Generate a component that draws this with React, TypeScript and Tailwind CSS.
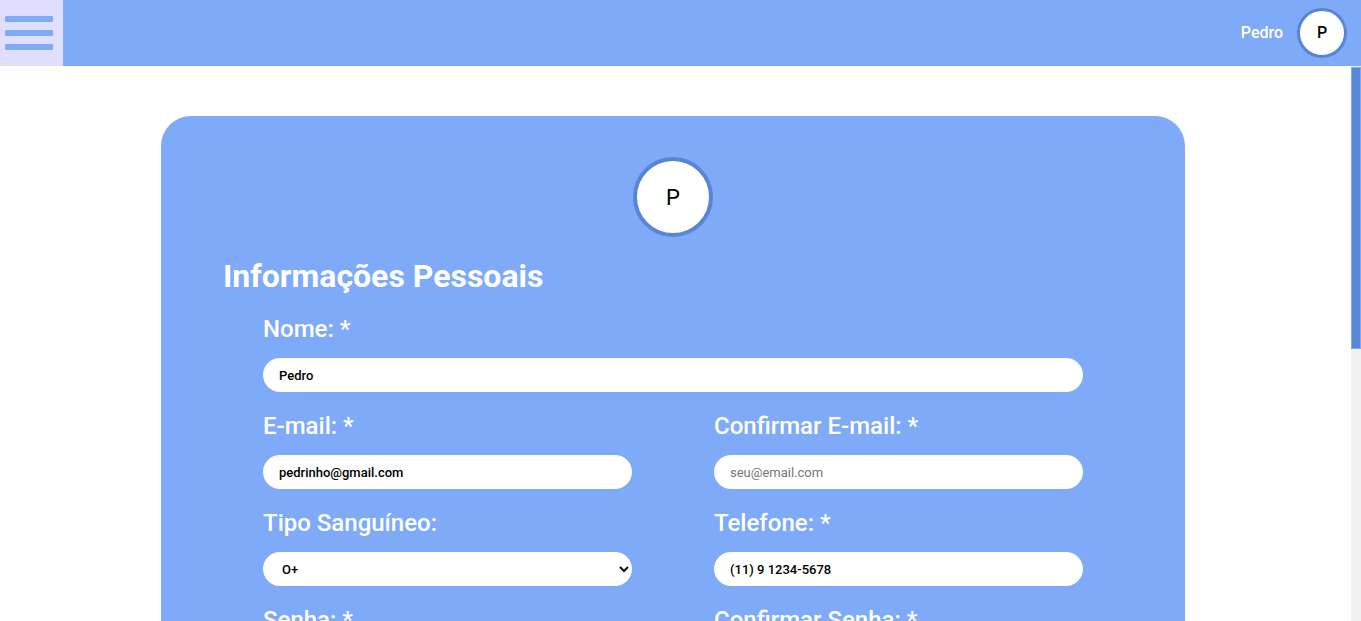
import React from 'react';

const Field = ({ label, children }: { label: string; children: React.ReactNode }) => (
  <div className="flex flex-col">
    <label className="text-[24px] leading-[28px] font-medium text-white mb-[15px]">{label}</label>
    {children}
  </div>
);

const inputCls =
  'h-[34px] w-full rounded-full bg-white pl-[16px] pr-4 text-[13px] font-medium text-black outline-none placeholder:text-[#757575] placeholder:font-normal';

const App: React.FC = () => {
  return (
    <div className="h-screen flex flex-col bg-white" style={{ fontFamily: 'Roboto, "Liberation Sans", sans-serif' }}>
      {/* Header */}
      <header className="h-[66px] shrink-0 bg-[#7eaaf8] flex items-center justify-between">
        <button className="h-full w-[63px] bg-[#e0defd] flex flex-col items-start justify-center gap-[8px] pl-[5px]">
          <span className="block w-[48px] h-[6px] bg-[#7eaaf8] rounded-[1px]" />
          <span className="block w-[48px] h-[6px] bg-[#7eaaf8] rounded-[1px]" />
          <span className="block w-[48px] h-[6px] bg-[#7eaaf8] rounded-[1px]" />
        </button>
        <div className="flex items-center gap-[14px] pr-[14px]">
          <span className="text-white text-[16px] font-medium">Pedro</span>
          <div className="w-[50px] h-[50px] rounded-full bg-white border-[3px] border-[#5885d6] flex items-center justify-center text-[16px] font-medium text-black">
            P
          </div>
        </div>
      </header>

      <div className="flex-1 min-h-0 flex">
        {/* Scroll area */}
        <main className="flex-1 overflow-y-auto [scrollbar-width:none]">
          <div className="pt-[50px] pb-[50px] pl-[161px]">
            <section className="w-[1024px] rounded-[30px] bg-[#7eaaf8] pt-[41px] pb-[60px]">
              <div className="flex justify-center">
                <div className="w-[80px] h-[80px] rounded-full bg-white border-4 border-[#5885d6] flex items-center justify-center text-[22px] text-black">
                  P
                </div>
              </div>

              <h2 className="mt-[21px] ml-[62px] text-[32px] leading-[37px] font-bold text-white">Informações Pessoais</h2>

              <div className="mt-[20px] px-[102px] flex flex-col gap-[20px]">
                <Field label="Nome: *">
                  <input className={inputCls} defaultValue="Pedro" />
                </Field>

                <div className="grid grid-cols-2 gap-x-[82px] gap-y-[20px]">
                  <Field label="E-mail: *">
                    <input className={inputCls} defaultValue="pedrinho@gmail.com" />
                  </Field>
                  <Field label="Confirmar E-mail: *">
                    <input className={inputCls} placeholder="seu@email.com" />
                  </Field>
                  <Field label="Tipo Sanguíneo:">
                    <select className="h-[34px] w-full rounded-full bg-white pl-[15px] pr-[4px] text-[13px] font-medium text-black outline-none" defaultValue="O+">
                      <option>A+</option>
                      <option>A-</option>
                      <option>B+</option>
                      <option>B-</option>
                      <option>AB+</option>
                      <option>AB-</option>
                      <option>O+</option>
                      <option>O-</option>
                    </select>
                  </Field>
                  <Field label="Telefone: *">
                    <input className={inputCls} defaultValue="(11) 9 1234-5678" />
                  </Field>
                  <Field label="Senha: *">
                    <input type="password" className={inputCls} placeholder="********" />
                  </Field>
                  <Field label="Confirmar Senha: *">
                    <input type="password" className={inputCls} placeholder="********" />
                  </Field>
                  <Field label="Data de Nascimento:">
                    <input className={inputCls} placeholder="dd/mm/aaaa" />
                  </Field>
                  <Field label="CEP:">
                    <input className={inputCls} placeholder="00000-000" />
                  </Field>
                </div>

                <div className="mt-[30px] flex justify-center">
                  <button className="h-[44px] w-[200px] rounded-full bg-white text-[#5885d6] text-[18px] font-bold">
                    Salvar
                  </button>
                </div>
              </div>
            </section>
          </div>
        </main>

        {/* Scrollbar */}
        <aside className="w-[10px] shrink-0 bg-[#f0f0f0]">
          <div className="mt-[1px] h-[282px] bg-[#5885d6] border border-[#7eaaf8]" />
        </aside>
      </div>
    </div>
  );
};

export default App;
